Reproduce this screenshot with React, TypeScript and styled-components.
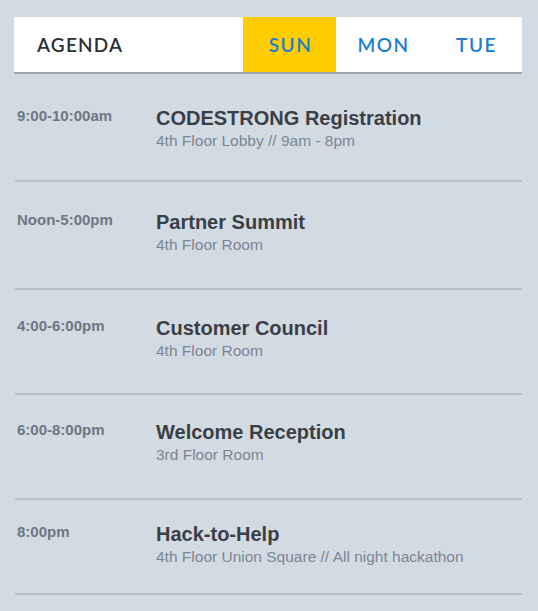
import React, { useState } from 'react';
import styled, { createGlobalStyle } from 'styled-components';

const GlobalStyle = createGlobalStyle`
	html, body {
		margin: 0;
		padding: 0;
		background: #d3dbe2;
	}
	body {
		font-family: 'Liberation Sans', Arial, sans-serif;
	}
`;

interface Session {
	time: string;
	title: string;
	place: string;
	pt: number;
	pb: number;
}

const sessions: Session[] = [
	{ time: '9:00-10:00am', title: 'CODESTRONG Registration', place: '4th Floor Lobby // 9am - 8pm', pt: 33, pb: 30 },
	{ time: 'Noon-5:00pm', title: 'Partner Summit', place: '4th Floor Room', pt: 29, pb: 34 },
	{ time: '4:00-6:00pm', title: 'Customer Council', place: '4th Floor Room', pt: 27, pb: 33 },
	{ time: '6:00-8:00pm', title: 'Welcome Reception', place: '3rd Floor Room', pt: 26, pb: 34 },
	{ time: '8:00pm', title: 'Hack-to-Help', place: '4th Floor Union Square // All night hackathon', pt: 23, pb: 27 },
];

const days = ['SUN', 'MON', 'TUE'];

const App = () => {
	const [day, setDay] = useState('SUN');

	return (
		<>
			<GlobalStyle />
			<Page>
				<Header>
					<Heading>AGENDA</Heading>
					<Tabs>
						{days.map((d) => (
							<Tab key={d} $active={d === day} onClick={() => setDay(d)}>
								{d}
							</Tab>
						))}
					</Tabs>
				</Header>
				<List>
					{sessions.map((s) => (
						<Row key={s.title} $pt={s.pt} $pb={s.pb}>
							<Time>{s.time}</Time>
							<Details>
								<Title>{s.title}</Title>
								<Place>{s.place}</Place>
							</Details>
						</Row>
					))}
				</List>
			</Page>
		</>
	);
};

export default App;

const Page = styled.div`
	padding: 17px 16px 0 14px;
`;

const Header = styled.div`
	display: flex;
	align-items: stretch;
	height: 55px;
	background: #fff;
	border-bottom: 2px solid #a0a6ab;
`;

const Heading = styled.div`
	flex: 1;
	display: flex;
	align-items: center;
	padding-left: 23px;
	font-family: Lato, 'Open Sans', sans-serif;
	font-size: 19px;
	font-weight: 600;
	letter-spacing: 1.2px;
	color: #2e3033;
`;

const Tabs = styled.div`
	display: flex;
`;

const Tab = styled.button<{ $active: boolean }>`
	width: 93px;
	border: 0;
	margin: 0;
	padding: 0 0 0 2px;
	background: ${({ $active }) => ($active ? '#ffcc00' : 'transparent')};
	font-family: Lato, 'Open Sans', sans-serif;
	font-size: 19px;
	font-weight: 600;
	letter-spacing: 1.5px;
	color: #1b7fd1;
	cursor: pointer;
`;

const List = styled.div`
	display: flex;
	flex-direction: column;
	margin-left: 1px;
`;

const Row = styled.div<{ $pt: number; $pb: number }>`
	display: flex;
	align-items: flex-start;
	padding: ${({ $pt, $pb }) => `${$pt}px 0 ${$pb}px`};
	border-bottom: 2px solid #b7bec5;
`;

const Time = styled.div`
	box-sizing: border-box;
	width: 141px;
	padding-left: 2px;
	font-size: 15px;
	line-height: 18px;
	font-weight: bold;
	color: #6c7783;
`;

const Details = styled.div`
	display: flex;
	flex-direction: column;
	gap: 3px;
`;

const Title = styled.div`
	font-size: 20px;
	line-height: 22px;
	font-weight: bold;
	color: #3a3f47;
`;

const Place = styled.div`
	font-size: 15.5px;
	line-height: 18px;
	color: #7c8693;
`;
